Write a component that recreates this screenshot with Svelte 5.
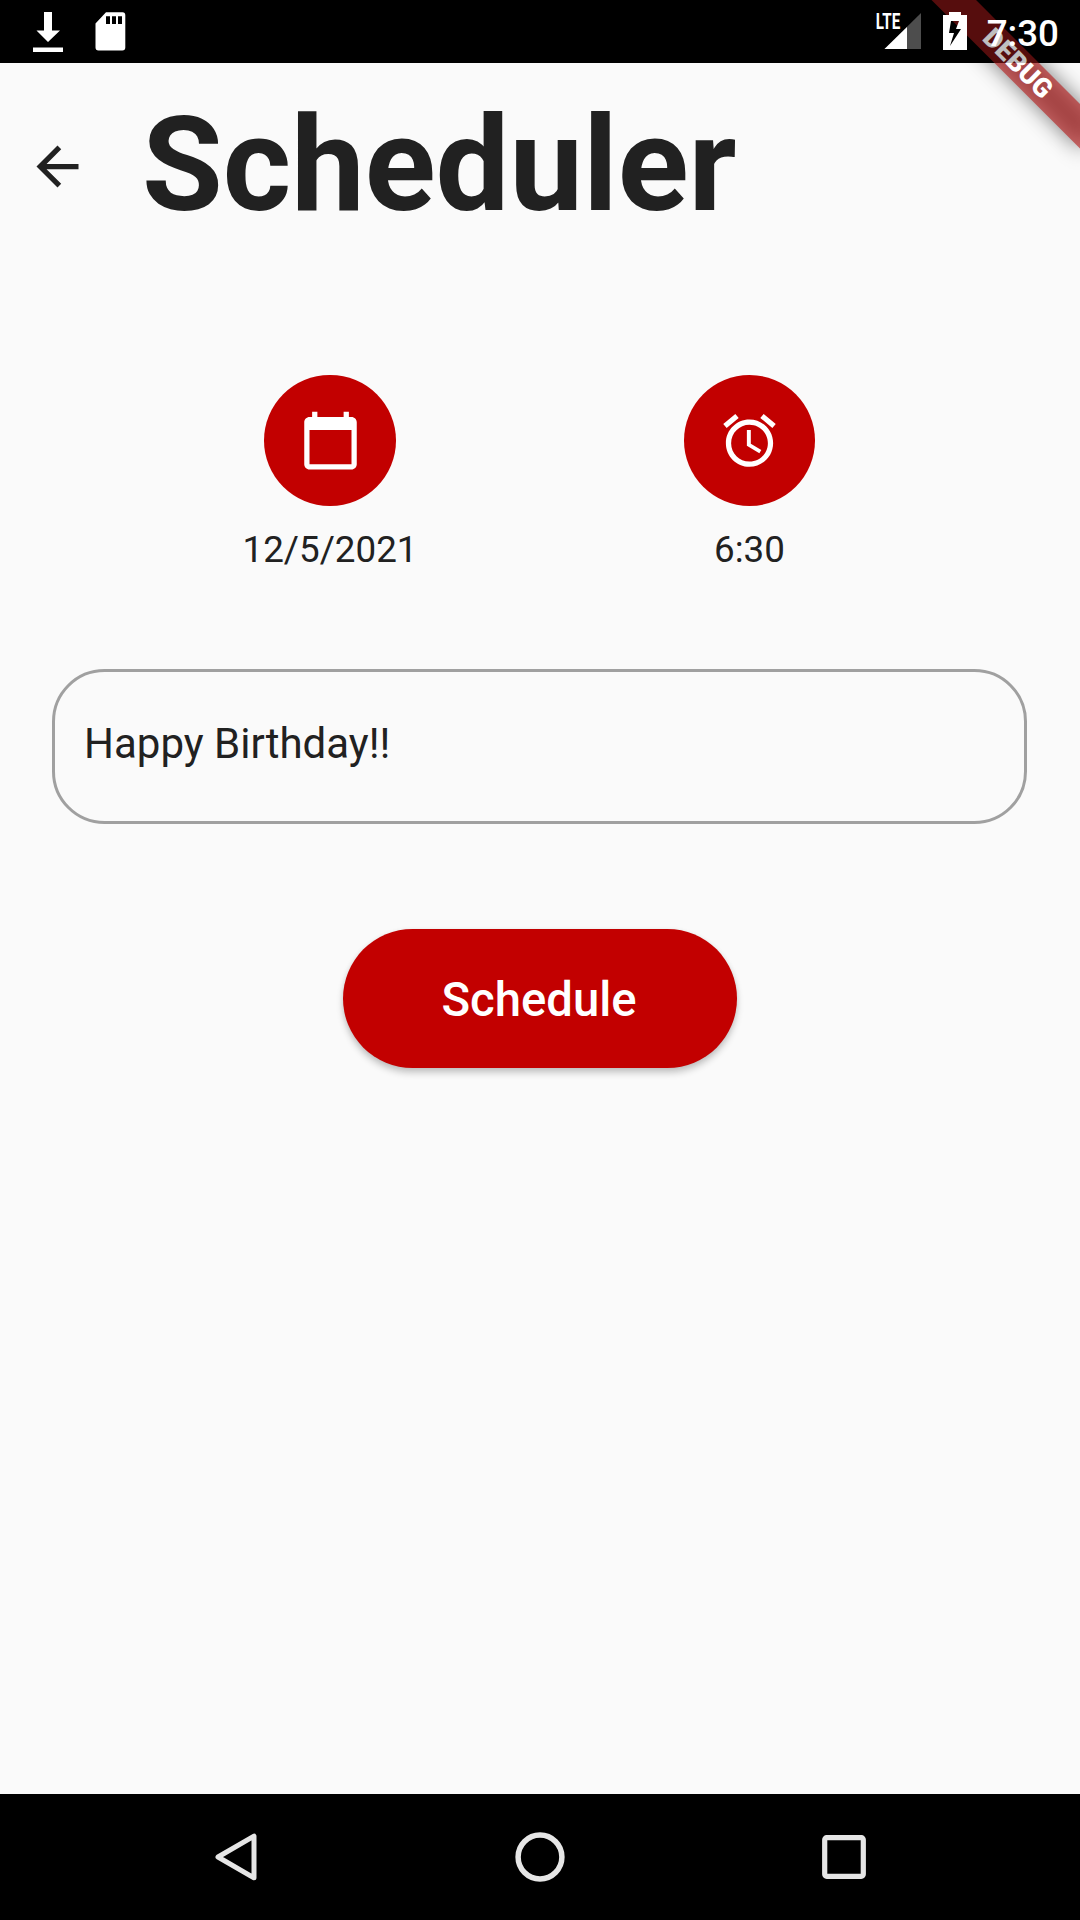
<script>
  let message = $state('Happy Birthday!!');
  const date = '12/5/2021';
  const time = '6:30';
</script>

<div class="screen">
  <header class="status">
    <div class="status-left">
      <svg class="download" width="30" height="40" viewBox="0 0 30 40">
        <path d="M11 0h8v18.5h8L15 30 3.500 18.500H11zM0 35.500h30V40H0z" fill="#fff" />
      </svg>
      <svg width="31" height="39" viewBox="0 0 31 39">
        <path
          fill="#fff"
          fill-rule="evenodd"
          d="M11 .3H27.500A3 3 0 0 1 30.300 3.300V35.500A3 3 0 0 1 27.300 38.500H3.500A3 3 0 0 1 .5 35.500V11.500zM11 4.300V12h4V4.300zM17 4.300V12h4V4.300zM23 4.300V12h4V4.300z"
        />
      </svg>
    </div>
    <div class="status-right">
      <svg class="signal" width="54" height="50" viewBox="-8 -12 54 50">
        <path d="M46 1V37H9.500z" fill="#4d4d4d" />
        <path d="M32 15V37H9.500z" fill="#fff" />
        <text class="lte" x=".8" y="17" textLength="24.500" lengthAdjust="spacingAndGlyphs">LTE</text>
      </svg>
      <svg class="battery" width="24" height="38" viewBox="0 0 24 38">
        <path fill="#fff" fill-rule="evenodd" d="M6 0H18V3H24V38H0V3H6zM8 9L6 21H11L7 34L18 17H13L16 9z" />
      </svg>
      <span class="clock">7:30</span>
    </div>
  </header>

  <svg class="debug" width="160" height="170" viewBox="0 0 160 170">
    <defs>
      <filter id="soft" x="-30%" y="-200%" width="160%" height="500%">
        <feGaussianBlur stdDeviation="10.4" />
      </filter>
    </defs>
    <g transform="translate(160 0) rotate(45)">
      <rect x="-105" y="73.500" width="210" height="31.500" fill="#000" fill-opacity=".5" filter="url(#soft)" />
      <rect x="-105" y="73.500" width="210" height="31.500" fill="#b71c1c" fill-opacity=".627" />
      <text class="debug-text" x="1" y="97.800" text-anchor="middle">DEBUG</text>
    </g>
  </svg>

  <main>
    <div class="appbar">
      <button class="back" aria-label="Back">
        <svg width="63" height="63" viewBox="0 0 24 24">
          <path fill="#212121" d="M20 11H7.830l5.590-5.590L12 4l-8 8 8 8 1.410-1.410L7.830 13H20v-2z" />
        </svg>
      </button>
      <h1>Scheduler</h1>
    </div>

    <section class="pickers">
      <div class="picker">
        <button class="round" aria-label="Pick date">
          <svg width="63" height="63" viewBox="0 0 24 24">
            <path
              fill="#fff"
              d="M20 3h-1V1h-2v2H7V1H5v2H4c-1.100 0-2 .9-2 2v16c0 1.100.9 2 2 2h16c1.100 0 2-.9 2-2V5c0-1.100-.9-2-2-2zm0 18H4V8h16v13z"
            />
          </svg>
        </button>
        <span>{date}</span>
      </div>
      <div class="picker">
        <button class="round" aria-label="Pick time">
          <svg width="63" height="63" viewBox="0 0 24 24">
            <path
              fill="#fff"
              d="M22 5.720l-4.600-3.860-1.290 1.530 4.600 3.860L22 5.720zM7.880 3.390L6.600 1.860 2 5.710l1.290 1.530 4.590-3.850zM12.500 8H11v6l4.750 2.850.75-1.230-4-2.370V8zM12 4c-4.970 0-9 4.030-9 9s4.020 9 9 9c4.970 0 9-4.030 9-9s-4.030-9-9-9zm0 16c-3.870 0-7-3.130-7-7s3.130-7 7-7 7 3.130 7 7-3.130 7-7 7z"
            />
          </svg>
        </button>
        <span>{time}</span>
      </div>
    </section>

    <input class="message" aria-label="Message" bind:value={message} />

    <button class="submit">Schedule</button>
  </main>

  <nav>
    <svg width="90" height="90" viewBox="0 0 90 90">
      <path d="M40.500 24.200V65.800L4.500 45z" transform="translate(22.500 0)" fill="none" stroke="#e6e6e6" stroke-width="5" stroke-linejoin="round" />
    </svg>
    <svg width="90" height="90" viewBox="0 0 90 90">
      <circle cx="45" cy="45" r="21.900" fill="none" stroke="#e6e6e6" stroke-width="5.500" />
    </svg>
    <svg width="90" height="90" viewBox="0 0 90 90">
      <rect x="25.700" y="25.700" width="38.600" height="38.600" rx="2" fill="none" stroke="#e6e6e6" stroke-width="5.200" />
    </svg>
  </nav>
</div>

<style>
  :global(body) {
    background: #000;
  }
  .screen {
    position: relative;
    display: flex;
    flex-direction: column;
    width: 1080px;
    height: 1920px;
    overflow: hidden;
    background: #000;
    color: #212121;
    font-family: Roboto, sans-serif;
  }
  svg {
    display: block;
    flex: none;
  }
  button {
    border: 0;
    padding: 0;
    background: none;
    font-family: inherit;
  }
  .status {
    position: relative;
    z-index: 2;
    flex: none;
    display: flex;
    justify-content: space-between;
    box-sizing: border-box;
    height: 63px;
    padding: 12px 21px 0 33px;
    background: rgba(0, 0, 0, 0.25);
  }
  .status-left {
    display: flex;
    gap: 32px;
  }
  .status-right {
    display: flex;
  }
  .signal {
    margin-top: -12px;
  }
  .battery {
    margin: 0 20px 0 22px;
  }
  .lte {
    font-size: 22px;
    font-weight: 700;
    fill: #fff;
  }
  .clock {
    font-size: 36.75px;
    font-weight: 500;
    line-height: 43px;
    color: #fff;
  }
  .debug {
    position: absolute;
    z-index: 1;
    top: 0;
    right: 0;
  }
  .debug-text {
    font-size: 26.775px;
    font-weight: 900;
    fill: #fff;
  }
  main {
    flex: 1;
    display: flex;
    flex-direction: column;
    align-items: center;
    background: #fafafa;
  }
  .appbar {
    align-self: stretch;
    display: flex;
    align-items: center;
    height: 206px;
    padding-left: 26px;
    gap: 53px;
  }
  h1 {
    margin: 0;
    padding-bottom: 2px;
    font-size: 131.25px;
    font-weight: 700;
    line-height: 154px;
  }
  .pickers {
    display: flex;
    justify-content: center;
    gap: 159.5px;
    margin: 106px 0.5px 0 0;
  }
  .picker {
    display: flex;
    flex-direction: column;
    align-items: center;
    width: 260px;
    font-size: 36.75px;
    line-height: 43px;
  }
  .round {
    display: flex;
    align-items: center;
    justify-content: center;
    width: 131.25px;
    height: 131.25px;
    margin-bottom: 22px;
    border-radius: 50%;
    background: #c20000;
  }
  .message {
    box-sizing: border-box;
    width: 975px;
    height: 155px;
    margin: 98px 1px 0 0;
    padding: 0 29px 6px;
    border: 3px solid #a0a0a0;
    border-radius: 52.5px;
    background: none;
    color: #212121;
    font-family: inherit;
    font-size: 42px;
    outline: none;
  }
  .submit {
    width: 394px;
    height: 139px;
    margin-top: 105px;
    padding: 3px 2px 0 0;
    border-radius: 70px;
    background: #c20000;
    box-shadow: 0 5px 7px rgba(0, 0, 0, 0.2), 0 1px 5px rgba(0, 0, 0, 0.08);
    color: #fff;
    font-size: 47.25px;
    font-weight: 500;
  }
  nav {
    flex: none;
    display: flex;
    align-items: center;
    justify-content: center;
    gap: 214px;
    height: 126px;
  }
</style>
